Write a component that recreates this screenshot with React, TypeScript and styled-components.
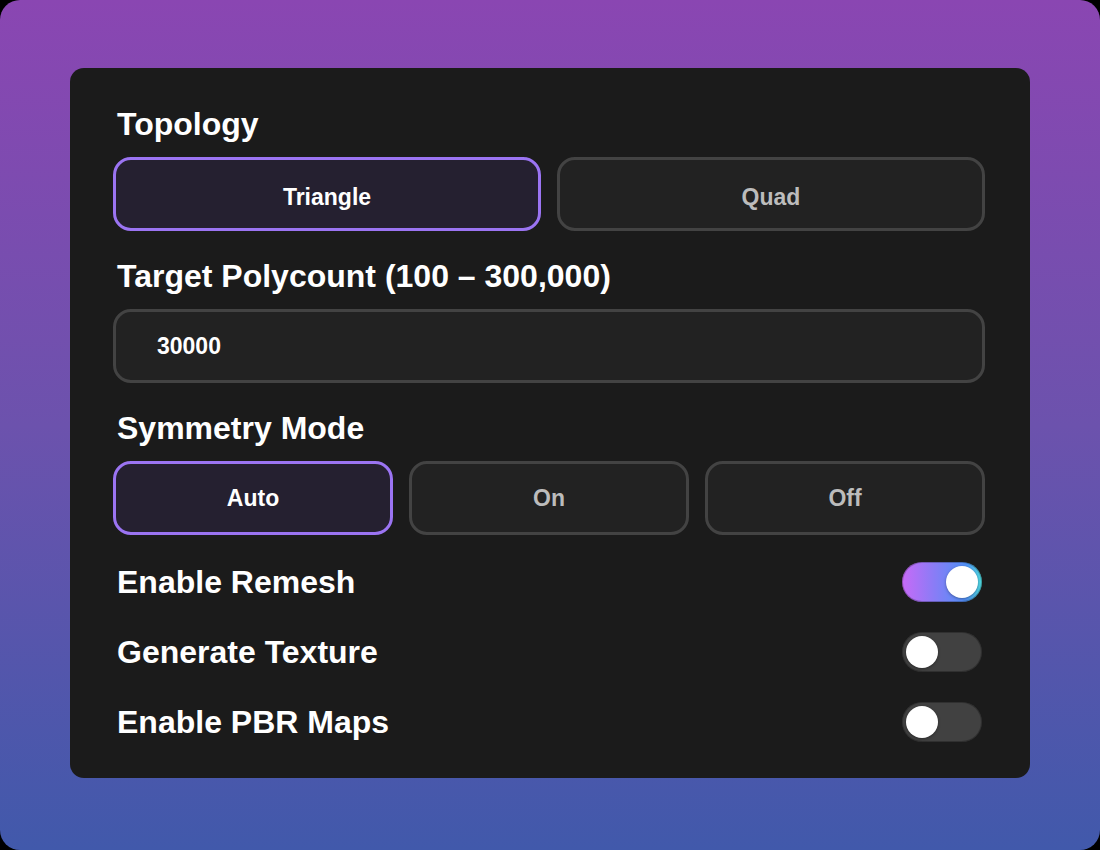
import React from "react";
import styled, { createGlobalStyle } from "styled-components";

type ToggleProps = {
  on: boolean;
};

type OptionProps = {
  active: boolean;
  lower?: boolean;
};

const GlobalStyle = createGlobalStyle`
  html, body {
    margin: 0;
    padding: 0;
    background: #000000;
  }
  * {
    box-sizing: border-box;
  }
`;

const Page = styled.div`
  width: 1100px;
  height: 850px;
  border-radius: 20px;
  background: linear-gradient(180deg, #8a46b2 0%, #6c52ad 50%, #4159ab 100%);
  padding: 68px 70px 72px 70px;
  font-family: "Liberation Sans", Arial, sans-serif;
`;

const Panel = styled.div`
  width: 960px;
  height: 710px;
  background: #1b1b1b;
  border-radius: 14px;
  padding: 38px 45px 36px 43px;
  display: flex;
  flex-direction: column;
  gap: 27px;
`;

const Section = styled.div`
  display: flex;
  flex-direction: column;
  gap: 14px;
`;

const Label = styled.div`
  font-size: 32px;
  line-height: 37px;
  font-weight: bold;
  color: #ffffff;
  padding-left: 4px;
`;

const Options = styled.div<{ cols: number }>`
  display: grid;
  grid-template-columns: repeat(${(props) => props.cols}, 1fr);
  gap: 16px;
`;

const Option = styled.button<OptionProps>`
  height: 74px;
  border-radius: 18px;
  border: 3px solid ${(props) => (props.active ? "#9b74f2" : "#434343")};
  background: ${(props) => (props.active ? "#252030" : "#222222")};
  color: ${(props) => (props.active ? "#ffffff" : "#bcbcbc")};
  font-family: "Liberation Sans", Arial, sans-serif;
  font-size: 23px;
  font-weight: bold;
  padding: ${(props) => (props.lower ? "7px 0 0" : "0")};
  cursor: pointer;
`;

const Input = styled.input`
  height: 74px;
  border-radius: 18px;
  border: 3px solid #434343;
  background: #222222;
  color: #ffffff;
  font-family: "Liberation Sans", Arial, sans-serif;
  font-size: 23px;
  font-weight: bold;
  padding: 0 41px;
  outline: none;
`;

const ToggleList = styled.div`
  display: flex;
  flex-direction: column;
  gap: 30px;
`;

const ToggleRow = styled.div`
  display: flex;
  align-items: center;
  justify-content: space-between;
  height: 40px;
`;

const Track = styled.button<ToggleProps>`
  position: relative;
  width: 80px;
  height: 40px;
  border-radius: 20px;
  border: none;
  padding: 0;
  margin-right: 3px;
  cursor: pointer;
  background: ${(props) =>
    props.on
      ? "linear-gradient(90deg, #c86af7 0%, #8a7cf6 40%, #5090f6 80%, #4fdcde 100%)"
      : "#414141"};
  box-shadow: inset 0 0 0 1px rgba(0, 0, 0, 0.25);
`;

const Knob = styled.span<ToggleProps>`
  position: absolute;
  top: 4px;
  left: ${(props) => (props.on ? "44px" : "4px")};
  width: 32px;
  height: 32px;
  border-radius: 50%;
  background: #ffffff;
  box-shadow: 0 1px 3px rgba(0, 0, 0, 0.35);
`;

function Toggle({ on, onClick }: { on: boolean; onClick: () => void }) {
  return (
    <Track on={on} onClick={onClick}>
      <Knob on={on} />
    </Track>
  );
}

export default function App() {
  const [topology, setTopology] = React.useState("Triangle");
  const [symmetry, setSymmetry] = React.useState("Auto");
  const [polycount, setPolycount] = React.useState("30000");
  const [toggles, setToggles] = React.useState({
    remesh: true,
    texture: false,
    pbr: false,
  });

  const flip = (key: keyof typeof toggles) =>
    setToggles((prev) => ({ ...prev, [key]: !prev[key] }));

  return (
    <>
      <GlobalStyle />
      <Page>
        <Panel>
          <Section>
            <Label>Topology</Label>
            <Options cols={2}>
              {["Triangle", "Quad"].map((item) => (
                <Option
                  key={item}
                  lower
                  active={topology === item}
                  onClick={() => setTopology(item)}
                >
                  {item}
                </Option>
              ))}
            </Options>
          </Section>
          <Section>
            <Label>Target Polycount (100 – 300,000)</Label>
            <Input
              value={polycount}
              onChange={(evt) => setPolycount(evt.target.value)}
            />
          </Section>
          <Section>
            <Label>Symmetry Mode</Label>
            <Options cols={3}>
              {["Auto", "On", "Off"].map((item) => (
                <Option
                  key={item}
                  active={symmetry === item}
                  onClick={() => setSymmetry(item)}
                >
                  {item}
                </Option>
              ))}
            </Options>
          </Section>
          <ToggleList>
            <ToggleRow>
              <Label>Enable Remesh</Label>
              <Toggle on={toggles.remesh} onClick={() => flip("remesh")} />
            </ToggleRow>
            <ToggleRow>
              <Label>Generate Texture</Label>
              <Toggle on={toggles.texture} onClick={() => flip("texture")} />
            </ToggleRow>
            <ToggleRow>
              <Label>Enable PBR Maps</Label>
              <Toggle on={toggles.pbr} onClick={() => flip("pbr")} />
            </ToggleRow>
          </ToggleList>
        </Panel>
      </Page>
    </>
  );
}
